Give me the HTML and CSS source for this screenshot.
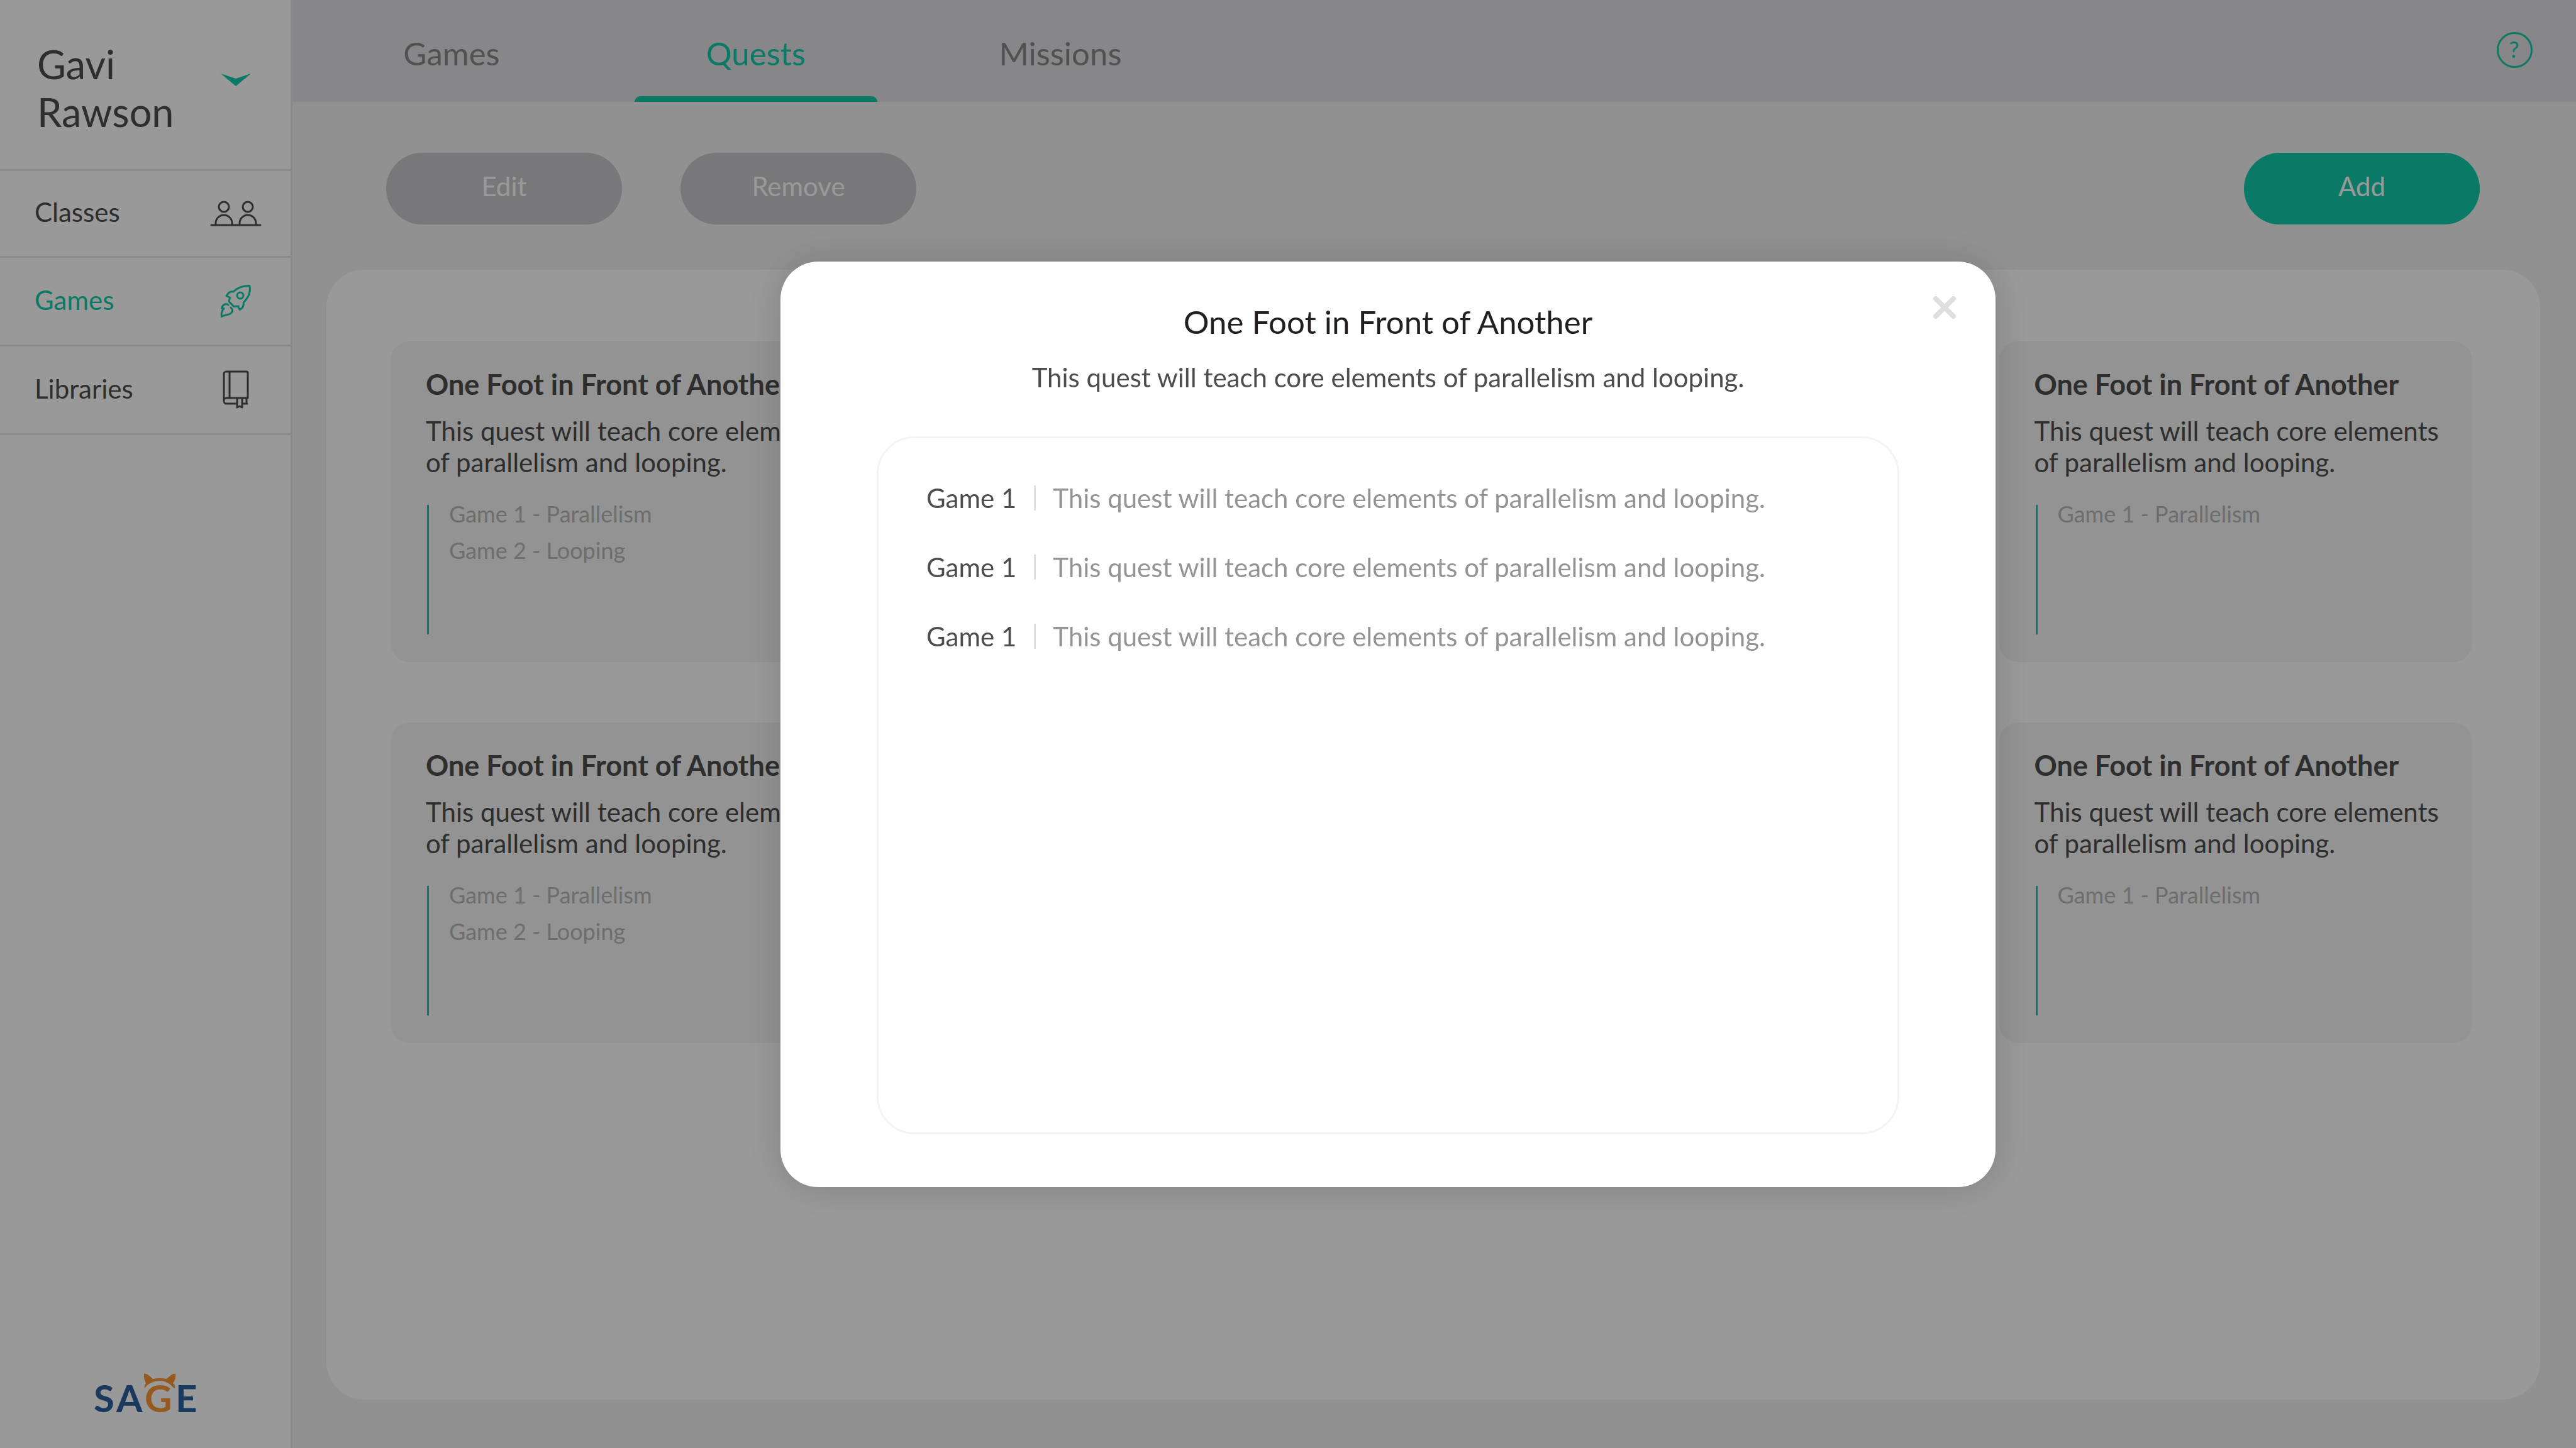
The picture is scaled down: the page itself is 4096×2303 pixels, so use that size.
FILE: index.html
```html
<!DOCTYPE html>
<html lang="en">
<head>
<meta charset="utf-8">
<title>SAGE – Quests</title>
<link rel="stylesheet" href="styles.css">
</head>
<body>
<div class="app">
  <aside class="sidebar">
    <button class="user" type="button">
      <span class="user-name">Gavi<br>Rawson</span>
      <svg class="chevron" viewBox="0 0 48 20" aria-hidden="true"><path d="M0 0 24 8 48 0 24 20Z"/></svg>
    </button>
    <nav class="menu">
      <a class="menu-item" href="#classes"><span>Classes</span>
        <svg class="icon icon-people" viewBox="0 0 82 42" aria-hidden="true"><g><circle cx="22" cy="10" r="8"/><path d="M9 39v-3a13 13 0 0 1 26 0v3"/><circle cx="60" cy="10" r="8"/><path d="M47 39v-3a13 13 0 0 1 26 0v3"/><path d="M2 39h78"/></g></svg>
      </a>
      <a class="menu-item active" href="#games"><span>Games</span>
        <svg class="icon icon-rocket" viewBox="0 0 50 52" aria-hidden="true"><g><path d="M46.500 1.500C36 1.500 27 5 21 11C15 10 13 13 10 17.500L16 20.500C14 24 14 27 15 27.500L22 34.500L29 34C29.500 37 30 38.500 31.500 39.500C36 37 38 33 37 28.500C43 22 49 14 47 2Z"/><circle cx="32" cy="17" r="5"/><path d="M13 32C10 29 4 31 2.500 37L6 37.500C2 42 1.500 46 2.500 50.500C6 47.500 11 48.500 15 46.500C20 44 21 40 17 36"/></g></svg>
      </a>
      <a class="menu-item" href="#libraries"><span>Libraries</span>
        <svg class="icon icon-book" viewBox="0 0 42 62" aria-hidden="true"><g><path d="M22 53H6a4 4 0 0 1-4-4V6a4 4 0 0 1 4-4H38a2 2 0 0 1 2 2V44H6a4 4 0 0 0-4 4M11 2V44M32 53H39M38 44V53M23 44V59L27 57L31 59V44"/></g></svg>
      </a>
    </nav>
    <svg class="logo" viewBox="0 0 166 66">
      <text class="wordmark" y="62" x="-1 35 80 129">SA<tspan class="accent">G</tspan>E</text>
      <path class="ears" d="M79 1C84 0 88 5 93 9Q104 7 115 9C120 5 124 0 129 1Q130 9 125 16Q129 19 128 24Q126 24 125 22Q115 12 104 12Q93 12 83 20L80 24Q79 19 82 16Q78 9 79 1Z"/>
    </svg>
  </aside>

  <div class="content">
    <header class="topbar">
      <nav class="tabs">
        <a class="tab" href="#tab-games">Games</a>
        <a class="tab selected" href="#tab-quests">Quests</a>
        <a class="tab" href="#tab-missions">Missions</a>
      </nav>
      <button class="help" type="button">?</button>
    </header>
    <div class="toolbar">
      <button class="pill" type="button">Edit</button>
      <button class="pill" type="button">Remove</button>
      <button class="pill primary" type="button">Add</button>
    </div>
    <main class="panel">
      <article class="card first">
        <h2>One Foot in Front of Another</h2>
        <p>This quest will teach core elements of parallelism and looping.</p>
        <ul><li>Game 1 - Parallelism</li><li>Game 2 - Looping</li></ul>
      </article>
      <article class="card last">
        <h2>One Foot in Front of Another</h2>
        <p>This quest will teach core elements of parallelism and looping.</p>
        <ul><li>Game 1 - Parallelism</li></ul>
      </article>
      <article class="card first">
        <h2>One Foot in Front of Another</h2>
        <p>This quest will teach core elements of parallelism and looping.</p>
        <ul><li>Game 1 - Parallelism</li><li>Game 2 - Looping</li></ul>
      </article>
      <article class="card last">
        <h2>One Foot in Front of Another</h2>
        <p>This quest will teach core elements of parallelism and looping.</p>
        <ul><li>Game 1 - Parallelism</li></ul>
      </article>
    </main>
  </div>
</div>

<div class="overlay">
  <section class="modal" role="dialog" aria-modal="true" aria-labelledby="modal-title">
    <button class="close" type="button" aria-label="Close">
      <svg viewBox="0 0 36 36" aria-hidden="true"><path d="M4 4 32 32M32 4 4 32"/></svg>
    </button>
    <h1 id="modal-title">One Foot in Front of Another</h1>
    <p class="summary">This quest will teach core elements of parallelism and looping.</p>
    <ul class="games">
      <li><span class="game-name">Game 1</span><span class="game-text">This quest will teach core elements of parallelism and looping.</span></li>
      <li><span class="game-name">Game 1</span><span class="game-text">This quest will teach core elements of parallelism and looping.</span></li>
      <li><span class="game-name">Game 1</span><span class="game-text">This quest will teach core elements of parallelism and looping.</span></li>
    </ul>
  </section>
</div>
</body>
</html>
```
FILE: styles.css
```css
:root {
  --green: #12cbaa;
  --ink: #4d4d4d;
  --line: #e6e6e6;
}

* { box-sizing: border-box; }

body {
  margin: 0;
  font-family: Lato, "Open Sans", sans-serif;
  font-size: 42px;
  line-height: 50px;
  color: var(--ink);
  background: #f2f2f2;
}

h1, h2, p, ul { margin: 0; padding: 0; }
ul { list-style: none; }
a { color: inherit; text-decoration: none; }

button {
  border: 0;
  padding: 0;
  background: none;
  font: inherit;
  color: inherit;
}

.app { display: flex; min-height: 100vh; }

/* Sidebar */
.sidebar {
  flex: none;
  display: flex;
  flex-direction: column;
  width: 465px;
  background: #fff;
  border-right: 3px solid var(--line);
}

.user {
  display: flex;
  justify-content: space-between;
  align-items: flex-start;
  padding: 64px 63px 53px 59px;
  border-bottom: 3px solid var(--line);
  text-align: left;
}

.user-name { font-size: 63px; line-height: 76px; }

.chevron { width: 48px; height: 20px; margin-top: 53px; fill: var(--green); }

.menu-item {
  display: flex;
  justify-content: space-between;
  align-items: center;
  height: 141px;
  padding: 0 15px 0 55px;
  border-bottom: 3px solid var(--line);
}

.menu-item:first-child { height: 138px; }
.menu-item span { padding-bottom: 5px; }
.menu-item.active { color: var(--green); }

.icon { width: 144px; fill: none; stroke: currentColor; stroke-width: 3; stroke-linecap: round; stroke-linejoin: round; }
.icon-people { height: 42px; }
.icon-rocket { height: 52px; }
.icon-book { height: 62px; }

.logo { width: 166px; height: 66px; margin: auto auto 53px 150px; overflow: visible; }
.wordmark { font-size: 60px; font-weight: 700; fill: #2b619b; }
.accent, .ears { fill: #f89634; }

/* Content */
.content { flex: 1; display: flex; flex-direction: column; min-width: 0; }

.topbar {
  display: flex;
  justify-content: space-between;
  align-items: flex-start;
  height: 162px;
  padding: 0 69px 0 60px;
  background: #e1e1e4;
}

.tabs { display: flex; gap: 98px; height: 100%; font-size: 51px; line-height: 60px; color: #888; }

.tab {
  display: flex;
  flex-direction: column;
  justify-content: space-between;
  width: 386px;
  padding-top: 55px;
  text-align: center;
}

.tab.selected { color: var(--green); }

.tab.selected::after {
  content: "";
  height: 9px;
  border-radius: 9px 9px 0 0;
  background: var(--green);
}

.help {
  width: 57px;
  height: 57px;
  margin-top: 51px;
  padding-right: 2px;
  padding-bottom: 3px;
  border: 3px solid var(--green);
  border-radius: 50%;
  font-size: 36px;
  line-height: 48px;
  color: var(--green);
}

.toolbar { display: flex; gap: 93px; padding: 81px 153px 72px 149px; }

.pill {
  width: 375px;
  height: 114px;
  padding-bottom: 8px;
  border-radius: 57px;
  background: #c9c9cc;
  color: #fff;
}

.pill.primary { margin-left: auto; background: var(--green); }

.panel {
  flex: 1;
  display: grid;
  grid-template-columns: repeat(4, 1fr);
  grid-auto-rows: 510px;
  gap: 96px 100px;
  margin: 0 57px 77px 54px;
  padding: 114px 108px 114px 102px;
  border-radius: 60px;
  background: #fff;
}

.card {
  display: flex;
  flex-direction: column;
  padding: 41px 40px 44px 56px;
  border-radius: 30px;
  background: #f5f5f5;
}

.card.first { grid-column: 1; }
.card.last { grid-column: 4; }

.card h2 { font-size: 45px; line-height: 54px; }
.card p { margin-top: 22px; }

.card ul {
  flex: 1;
  display: flex;
  flex-direction: column;
  gap: 30px;
  margin: 43px 0 0 2px;
  padding-left: 32px;
  border-left: 3px solid var(--green);
  font-size: 36px;
  line-height: 28px;
  color: #b7b7b7;
}

/* Dialog */
.overlay {
  position: fixed;
  inset: 0;
  display: flex;
  justify-content: center;
  align-items: center;
  padding-left: 318px;
  background: rgba(0, 0, 0, 0.4);
}

.modal {
  position: relative;
  display: flex;
  flex-direction: column;
  width: 1932px;
  height: 1472px;
  padding: 66px 153px 84px;
  border-radius: 60px;
  background: #fff;
  box-shadow: 0 0 60px rgba(0, 0, 0, 0.16);
  text-align: center;
}

.modal h1 { font-size: 51px; font-weight: 400; line-height: 60px; color: #231f20; }
.summary { margin-top: 33px; }

.close { position: absolute; top: 55px; right: 63px; width: 36px; height: 36px; }
.close svg { display: block; fill: none; stroke: #dfdfdf; stroke-width: 8; stroke-linecap: round; }

.games {
  flex: 1;
  display: flex;
  flex-direction: column;
  gap: 60px;
  margin-top: 69px;
  padding: 70px 76px;
  border: 3px solid #f4f4f4;
  border-radius: 60px;
  text-align: left;
}

.games li { display: flex; align-items: center; }

.game-text {
  margin-left: 28px;
  padding-left: 27px;
  border-left: 3px solid #e0e0e0;
  line-height: 40px;
  color: #949494;
}
```
